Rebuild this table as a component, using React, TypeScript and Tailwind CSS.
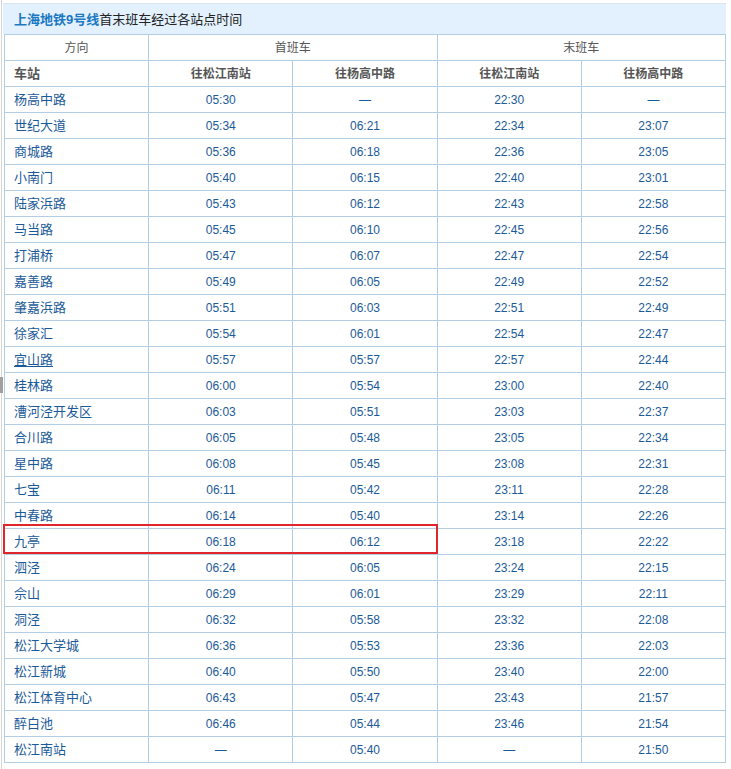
import React from 'react';

const rows: [string, string, string, string, string][] = [
  ['杨高中路', '05:30', '—', '22:30', '—'],
  ['世纪大道', '05:34', '06:21', '22:34', '23:07'],
  ['商城路', '05:36', '06:18', '22:36', '23:05'],
  ['小南门', '05:40', '06:15', '22:40', '23:01'],
  ['陆家浜路', '05:43', '06:12', '22:43', '22:58'],
  ['马当路', '05:45', '06:10', '22:45', '22:56'],
  ['打浦桥', '05:47', '06:07', '22:47', '22:54'],
  ['嘉善路', '05:49', '06:05', '22:49', '22:52'],
  ['肇嘉浜路', '05:51', '06:03', '22:51', '22:49'],
  ['徐家汇', '05:54', '06:01', '22:54', '22:47'],
  ['宜山路', '05:57', '05:57', '22:57', '22:44'],
  ['桂林路', '06:00', '05:54', '23:00', '22:40'],
  ['漕河泾开发区', '06:03', '05:51', '23:03', '22:37'],
  ['合川路', '06:05', '05:48', '23:05', '22:34'],
  ['星中路', '06:08', '05:45', '23:08', '22:31'],
  ['七宝', '06:11', '05:42', '23:11', '22:28'],
  ['中春路', '06:14', '05:40', '23:14', '22:26'],
  ['九亭', '06:18', '06:12', '23:18', '22:22'],
  ['泗泾', '06:24', '06:05', '23:24', '22:15'],
  ['佘山', '06:29', '06:01', '23:29', '22:11'],
  ['洞泾', '06:32', '05:58', '23:32', '22:08'],
  ['松江大学城', '06:36', '05:53', '23:36', '22:03'],
  ['松江新城', '06:40', '05:50', '23:40', '22:00'],
  ['松江体育中心', '06:43', '05:47', '23:43', '21:57'],
  ['醉白池', '06:46', '05:44', '23:46', '21:54'],
  ['松江南站', '—', '05:40', '—', '21:50'],
];

const cell = 'border border-[#b3cde4] h-[26px] p-0';

export default function App() {
  return (
    <div className="relative w-[731px] h-[769px] bg-white font-['Liberation_Sans','Noto_Sans_CJK_SC',sans-serif] text-[12px] leading-none">
      <div className="absolute left-[1px] top-0 w-px h-[769px] bg-[#d6d6d6]" />
      <div className="absolute left-0 top-[377px] w-[3px] h-[16px] bg-[#a0a0a0]" />
      <div className="ml-[3px] pt-[3px] w-[723px]">
        <div className="h-[31px] bg-[#e2f1fd] border-t border-[#d9e6f0] flex items-center pl-[11px] text-[13px]">
          <span className="font-bold text-[#1b78c2]">上海地铁9号线</span>
          <span className="text-[#222]">首末班车经过各站点时间</span>
        </div>
        <div className="relative ml-[1px] w-[722px]">
          <table className="w-full table-fixed border-collapse">
            <tbody>
              <tr className="text-[#555]">
                <td className={`${cell} text-center`}>方向</td>
                <td colSpan={2} className={`${cell} text-center`}>首班车</td>
                <td colSpan={2} className={`${cell} text-center`}>末班车</td>
              </tr>
              <tr className="text-[#555] font-bold">
                <td className={`${cell} text-left pl-[9px] text-[13px]`}>车站</td>
                <td className={`${cell} text-center`}>往松江南站</td>
                <td className={`${cell} text-center`}>往杨高中路</td>
                <td className={`${cell} text-center`}>往松江南站</td>
                <td className={`${cell} text-center`}>往杨高中路</td>
              </tr>
              {rows.map(r => (
                <tr key={r[0]} className="text-[#1b5a98]">
                  <td className={`${cell} text-left pl-[9px] text-[13px]`}>
                    <span className={r[0] === '宜山路' ? 'underline underline-offset-2' : ''}>{r[0]}</span>
                  </td>
                  {r.slice(1).map((t, i) => (
                    <td key={i} className={`${cell} text-center`}>{t}</td>
                  ))}
                </tr>
              ))}
            </tbody>
          </table>
          <div className="absolute left-[-1px] top-[490px] w-[435px] h-[30px] border-2 border-[#e0262b]" />
        </div>
      </div>
    </div>
  );
}
